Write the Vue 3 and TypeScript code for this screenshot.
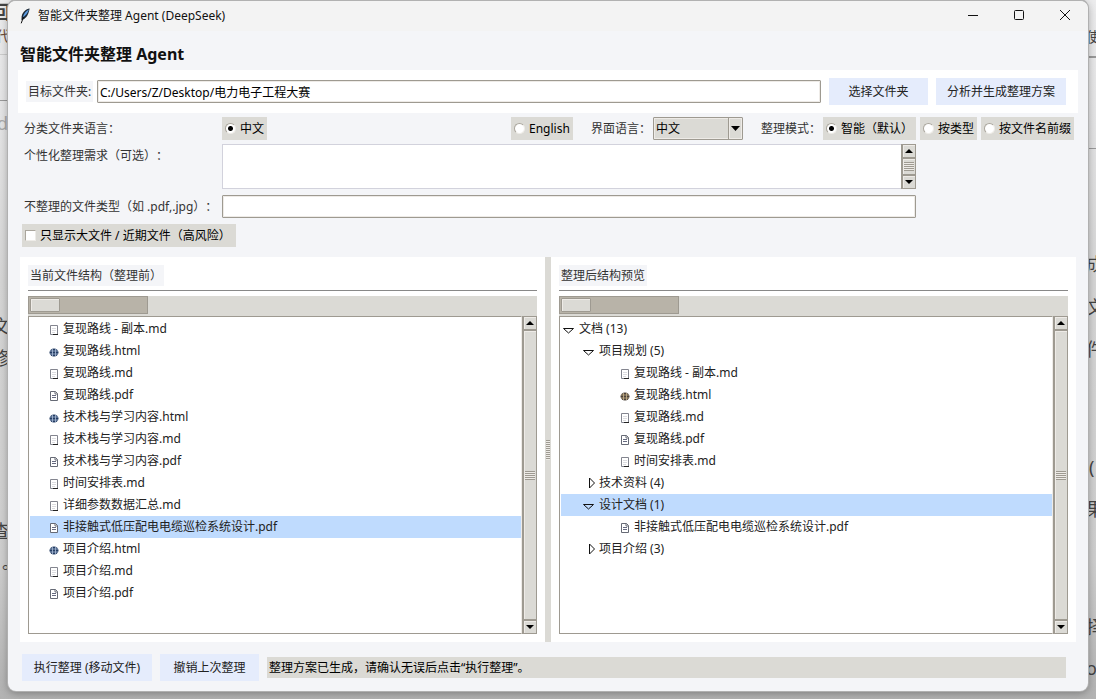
<script setup lang="ts">
import { ref } from 'vue'

type Kind = 'md' | 'html' | 'pdf' | 'open' | 'closed'
interface Row {
  kind: Kind
  text: string
  level: number
}
interface Pane {
  title: string
  rows: Row[]
}

const kindOf = (name: string): Kind => name.split('.').pop() as Kind
const file = (text: string, level: number): Row => ({ kind: kindOf(text), text, level })

const panes = ref<Pane[]>([
  {
    title: '当前文件结构（整理前）',
    rows: [
      '复现路线 - 副本.md',
      '复现路线.html',
      '复现路线.md',
      '复现路线.pdf',
      '技术栈与学习内容.html',
      '技术栈与学习内容.md',
      '技术栈与学习内容.pdf',
      '时间安排表.md',
      '详细参数数据汇总.md',
      '非接触式低压配电电缆巡检系统设计.pdf',
      '项目介绍.html',
      '项目介绍.md',
      '项目介绍.pdf',
    ].map((n) => file(n, 1)),
  },
  {
    title: '整理后结构预览',
    rows: [
      { kind: 'open', text: '文档 (13)', level: 0 },
      { kind: 'open', text: '项目规划 (5)', level: 2 },
      file('复现路线 - 副本.md', 3),
      file('复现路线.html', 3),
      file('复现路线.md', 3),
      file('复现路线.pdf', 3),
      file('时间安排表.md', 3),
      { kind: 'closed', text: '技术资料 (4)', level: 2 },
      { kind: 'open', text: '设计文档 (1)', level: 2 },
      file('非接触式低压配电电缆巡检系统设计.pdf', 3),
      { kind: 'closed', text: '项目介绍 (3)', level: 2 },
    ],
  },
])
const selected = ref<number[]>([9, 8])

const path = ref('C:/Users/Z/Desktop/电力电子工程大赛')
const folderLang = ref('zh')
const uiLang = ref('zh')
const mode = ref('smart')
const needs = ref('')
const excluded = ref('')
const onlyRisky = ref(false)
</script>

<template>
  <div class="desktop">
    <div class="behind" aria-hidden="true">
      <span class="frag l l1">回</span>
      <span class="frag l l2">代</span>
      <span class="frag l l3">d</span>
      <span class="frag l l4">文</span>
      <span class="frag l l5">修</span>
      <span class="frag l l6">查</span>
      <span class="frag l l7">。</span>
      <span class="frag r r1">使</span>
      <span class="frag r r2">成</span>
      <span class="frag r r3">文</span>
      <span class="frag r r4">件</span>
      <span class="frag r r5">(</span>
      <span class="frag r r6">果</span>
      <span class="frag r r7">择</span>
      <span class="frag r r8">oc</span>
      <i class="rule rule-a"></i>
      <i class="rule rule-b"></i>
      <i class="rule rule-c"></i>
      <i class="rule rule-d"></i>
    </div>

    <main class="window">
      <header class="titlebar">
        <svg class="feather" width="12" height="16" viewBox="0 0 12 16">
          <path d="M10.6 0.6C7 1 3.6 4 2.7 8.2L2.4 12l1.8-.4C7.600 10 9.700 6 10.6.6z" fill="#1b2733" />
          <path d="M10 1.400C7 2.600 4.600 5.300 3.800 9.300 6.500 8 8.800 5 10 1.400z" fill="#5b9be0" />
          <path d="M4.500 9 2.200 15.300" stroke="#111" stroke-width="1" fill="none" />
        </svg>
        <span class="caption">智能文件夹整理 Agent (DeepSeek)</span>
        <button class="sys" aria-label="最小化">
          <svg width="12" height="12" viewBox="0 0 12 12"><path d="M1 5.500h10" /></svg>
        </button>
        <button class="sys" aria-label="最大化">
          <svg width="12" height="12" viewBox="0 0 12 12"><rect x="1.500" y=".5" width="9" height="9" rx="1" /></svg>
        </button>
        <button class="sys" aria-label="关闭">
          <svg width="12" height="12" viewBox="0 0 12 12"><path d="M1 0l10 10M11 0L1 10" /></svg>
        </button>
      </header>

      <h1>智能文件夹整理 Agent</h1>

      <section class="target">
        <label class="tag" for="path">目标文件夹:</label>
        <input id="path" v-model="path" class="entry" type="text" />
        <button class="action pick">选择文件夹</button>
        <button class="action analyze">分析并生成整理方案</button>
      </section>

      <section class="options">
        <span class="lbl">分类文件夹语言：</span>
        <label class="choice first"><input v-model="folderLang" type="radio" name="fl" value="zh" />中文</label>
        <label class="choice"><input v-model="folderLang" type="radio" name="fl" value="en" />English</label>
        <label class="lbl mid" for="ui">界面语言：</label>
        <span class="combo">
          <select id="ui" v-model="uiLang">
            <option value="zh">中文</option>
            <option value="en">English</option>
          </select>
          <span class="drop"><svg width="9" height="5" viewBox="0 0 9 5"><path d="M0 0h9L4.500 5z" /></svg></span>
        </span>
        <span class="lbl mid">整理模式：</span>
        <label class="choice"><input v-model="mode" type="radio" name="mode" value="smart" />智能（默认）</label>
        <label class="choice gap"><input v-model="mode" type="radio" name="mode" value="type" />按类型</label>
        <label class="choice gap"><input v-model="mode" type="radio" name="mode" value="prefix" />按文件名前缀</label>

        <label class="lbl left" for="needs">个性化整理需求（可选）：</label>
        <div class="wide memo">
          <textarea id="needs" v-model="needs"></textarea>
          <div class="scroll">
            <button class="arrow" aria-label="向上"><svg width="8" height="4" viewBox="0 0 8 4"><path d="M0 4h8L4 0z" /></svg></button>
            <div class="thumb"><i class="grip"></i></div>
            <button class="arrow" aria-label="向下"><svg width="8" height="4" viewBox="0 0 8 4"><path d="M0 0h8L4 4z" /></svg></button>
          </div>
        </div>

        <label class="lbl left" for="excluded">不整理的文件类型（如 .pdf,.jpg）：</label>
        <input id="excluded" v-model="excluded" class="entry wide" type="text" />

        <label class="choice risky"><input v-model="onlyRisky" type="checkbox" />只显示大文件 / 近期文件（高风险）</label>
      </section>

      <section class="panes">
        <div v-for="(pane, p) in panes" :key="pane.title" class="pane">
          <h2 class="tag">{{ pane.title }}</h2>
          <hr />
          <div class="progress" role="progressbar" :aria-label="pane.title">
            <div class="trough"><div class="block"></div></div>
          </div>
          <div class="treebox">
            <ul class="tree">
              <li v-for="(row, i) in pane.rows" :key="row.text">
                <button
                  class="row"
                  :class="['lv' + row.level, { on: selected[p] === i }]"
                  @click="selected[p] = i"
                >
                  <svg v-if="row.kind === 'open'" class="tri" width="12" height="12" viewBox="0 0 12 12">
                    <path d="M.5 5.500h10L5.500 10z" />
                  </svg>
                  <svg v-else-if="row.kind === 'closed'" class="tri" width="12" height="12" viewBox="0 0 12 12">
                    <path d="M6.500 1v10L11.500 6z" />
                  </svg>
                  <svg v-else-if="row.kind === 'html'" class="ico" :class="{ warm: p === 1 }" width="10" height="10" viewBox="0 0 10 10">
                    <ellipse cx="5" cy="5.500" rx="4.500" ry="4" />
                    <path d="M1 4h8M1 7h8M3.500 2v7M6.500 2v7" stroke-width=".8" fill="none" />
                  </svg>
                  <svg v-else-if="row.kind === 'pdf'" class="ico" width="10" height="10" viewBox="0 0 10 10">
                    <path d="M1.500.5h5l2 2v7h-7z" fill="#fff" stroke="#666a75" />
                    <path d="M3 4.500h4M3 6.500h4" stroke="#666a80" fill="none" />
                    <path d="M6 .5v2.500h2.500" stroke="#666a75" fill="none" />
                  </svg>
                  <svg v-else class="ico" width="10" height="10" viewBox="0 0 10 10">
                    <path d="M1.500.5h7v9h-7z" fill="#fff" stroke="#83858f" />
                    <path d="M3 3.500h4M3 5.500h4M3 7.500h3" stroke="#dcdce0" fill="none" />
                    <path d="M4 9.500h5" stroke="#222" fill="none" />
                  </svg>
                  <span>{{ row.text }}</span>
                </button>
              </li>
            </ul>
            <div class="scroll">
              <button class="arrow" aria-label="向上"><svg width="8" height="4" viewBox="0 0 8 4"><path d="M0 4h8L4 0z" /></svg></button>
              <div class="thumb"><i class="grip"></i></div>
              <button class="arrow" aria-label="向下"><svg width="8" height="4" viewBox="0 0 8 4"><path d="M0 0h8L4 4z" /></svg></button>
            </div>
          </div>
        </div>
        <div class="sash"><i></i></div>
      </section>

      <footer>
        <button class="action run">执行整理 (移动文件)</button>
        <button class="action undo">撤销上次整理</button>
        <output>整理方案已生成，请确认无误后点击“执行整理”。</output>
      </footer>
    </main>
  </div>
</template>

<style>
body {
  margin: 0;
}
</style>

<style scoped>
* {
  box-sizing: border-box;
}
.desktop {
  position: relative;
  display: flex;
  min-height: 100vh;
  padding: 0 8px 8px;
  background: linear-gradient(#ececed 0, #e4e4e5 18%, #d6d6d6 40%, #cfcfcf 80%, #b2b2b2 100%);
  font-family: "Noto Sans", "Noto Sans CJK SC", sans-serif;
  font-size: 12px;
  line-height: 20px;
  text-spacing-trim: space-all;
  color: #222;
  overflow: hidden;
}
button,
input,
select,
textarea {
  font: inherit;
  color: inherit;
  margin: 0;
  padding: 0;
  border: 0;
  border-radius: 0;
  background: none;
}
.behind {
  position: absolute;
  inset: 0;
  overflow: hidden;
}
.frag {
  position: absolute;
  font-size: 18px;
  line-height: 24px;
  color: #444;
}
.l { right: calc(100% - 10px); }
.r { left: calc(100% - 10px); }
.l1 { top: 0; font-weight: bold; }
.l2 { top: 24px; font-size: 14px; color: #6b4a38; }
.l3 { top: 111px; right: calc(100% - 8px); color: #aaa; }
.l4 { top: 314px; }
.l5 { top: 346px; }
.l6 { top: 519px; }
.l7 { top: 550px; right: calc(100% - 20px); }
.r1 { top: 25px; font-size: 14px; }
.r2 { top: 252px; }
.r3 { top: 295px; }
.r4 { top: 337px; }
.r5 { top: 455px; left: calc(100% - 7px); }
.r6 { top: 497px; }
.r7 { top: 615px; }
.r8 { top: 656px; }
.rule {
  position: absolute;
  height: 1px;
  width: 8px;
  background: #999;
}
.rule-a { left: 0; top: 54px; background: #ccc; }
.rule-b { left: 0; top: 100px; }
.rule-c { right: 0; top: 56px; height: 2px; }
.rule-d { right: 0; top: 148px; }

.window {
  position: relative;
  flex: 1;
  min-width: 0;
  display: flex;
  flex-direction: column;
  background: #f4f5f8;
  border-top: 1px solid #b1b1b1;
  border-radius: 8px;
  box-shadow: 0 0 0 1px #b0b0b0, 0 2px 8px #00000055;
  overflow: hidden;
}
.titlebar {
  display: flex;
  align-items: center;
  height: 30px;
  padding-left: 11px;
  background: #f3f3f3;
  color: #111;
}
.caption {
  flex: 1;
  margin-left: 7px;
}
.sys {
  display: flex;
  align-items: center;
  justify-content: center;
  width: 46px;
  height: 28px;
}
.sys svg {
  fill: none;
  stroke: #111;
}
h1 {
  margin: 0;
  padding: 11px 12px 4px;
  font-size: 16px;
  line-height: 24px;
  font-weight: bold;
  color: #111;
}
.target {
  display: flex;
  align-items: center;
  margin: 0 10px;
  height: 43px;
  padding: 0 12px 0 8px;
  background: #fff;
}
.tag {
  align-self: flex-start;
  margin: 0;
  padding: 0 2px;
  height: 21px;
  background: #f4f5f8;
  font-size: 12px;
  line-height: 22px;
  font-weight: normal;
  color: #333;
}
.target .tag {
  align-self: center;
  width: 67px;
  margin-right: 4px;
  white-space: nowrap;
}
.entry {
  height: 23px;
  padding: 0 2px;
  background: #fff;
  border: 1px solid #9e9a91;
  border-radius: 1px;
  box-shadow: inset 0 0 0 1px #eeebe7;
  color: #000;
}
.target .entry {
  flex: 1;
  min-width: 0;
  margin-right: 8px;
}
.action {
  height: 27px;
  background: #e5ecfc;
  color: #222;
  white-space: nowrap;
}
.pick,
.undo {
  width: 99px;
  margin-right: 8px;
}
.analyze,
.run {
  width: 130px;
}
.run {
  margin-right: 8px;
}
.options {
  display: grid;
  grid-template-columns: 200px minmax(60px, 1fr) 62px 80px 90px 80px 93px 61px 97px;
  grid-template-rows: 27px 51px 29px 23px;
  align-items: start;
  margin: 4px 14px 10px;
}
.lbl {
  padding-left: 2px;
  line-height: 24px;
  white-space: nowrap;
  color: #333;
}
.mid {
  padding-left: 18px;
}
.left {
  grid-column: 1;
}
.wide {
  grid-column: 2 / 8;
}
.choice {
  display: flex;
  align-items: center;
  height: 23px;
  background: #dbdad5;
  color: #000;
  white-space: nowrap;
}
.first {
  justify-self: start;
  width: 45px;
}
.gap {
  margin-left: 4px;
}
.risky {
  grid-column: 1 / 3;
  justify-self: start;
  width: 214px;
}
.choice input {
  appearance: none;
  flex: none;
  width: 11px;
  height: 11px;
  margin: 0 4px 0 3px;
  background: #fff;
  border: 1px solid #aaa69d;
  border-right-color: #eeece8;
  border-bottom-color: #eeece8;
}
.choice input[type='radio'] {
  border-radius: 50%;
}
.choice input[type='radio']:checked {
  background: radial-gradient(circle, #000 0 2px, #fff 3px);
}
.choice input[type='checkbox']:checked {
  background: #000;
}
.combo {
  position: relative;
  display: block;
  height: 23px;
}
.combo select {
  appearance: none;
  width: 100%;
  height: 23px;
  padding: 0 18px 0 2px;
  background: #dbdad5;
  border: 1px solid #9e9a91;
  border-radius: 1px;
  box-shadow: inset 0 0 0 1px #eeebe7;
  color: #000;
}
.drop {
  position: absolute;
  top: 1px;
  right: 1px;
  bottom: 1px;
  width: 14px;
  display: flex;
  align-items: center;
  justify-content: center;
  border-left: 1px solid #9e9a91;
  box-shadow: inset 0 0 0 1px #eeebe7;
  pointer-events: none;
}
.memo {
  display: flex;
  height: 45px;
}
textarea {
  flex: 1;
  min-width: 0;
  height: 100%;
  padding: 2px;
  background: #fff;
  border: 1px solid #d2d2dc;
  border-right: 0;
  resize: none;
}
.scroll {
  display: flex;
  flex-direction: column;
  gap: 2px;
  width: 15px;
  padding: 1px 1px 1px 2px;
  background: #9e9a91;
}
.arrow,
.thumb {
  display: flex;
  align-items: center;
  justify-content: center;
  background: #dbdad5;
  box-shadow: inset 1px 1px 0 #eeebe7;
}
.arrow {
  flex: none;
  height: 12px;
}
.thumb {
  flex: 1;
}
.grip {
  width: 10px;
  height: 9px;
  background: repeating-linear-gradient(#9e9a91 0 1px, #eeebe7 1px 2px);
}
.panes {
  position: relative;
  flex: 1;
  display: grid;
  grid-template-columns: minmax(0, 1fr) minmax(0, 1fr);
  column-gap: 6px;
  margin: 0 12px;
}
.pane {
  display: flex;
  flex-direction: column;
  padding: 8px;
  background: #fff;
}
hr {
  width: 100%;
  height: 1px;
  margin: 4px 0 5px;
  border: 0;
  background: #888;
}
.progress {
  height: 20px;
  background: #dbdad5;
}
.trough {
  width: 120px;
  height: 18px;
  padding: 1px;
  background: #b8b3a8;
  border: 1px solid #9e9a91;
}
.block {
  width: 30px;
  height: 14px;
  background: #dbdad5;
  border: 1px solid #9e9a91;
  border-radius: 1px;
  box-shadow: inset 1px 1px 0 #eeebe7;
}
.treebox {
  flex: 1;
  display: flex;
}
.tree {
  flex: 1;
  min-width: 0;
  margin: 0;
  padding: 1px 0 1px 1px;
  list-style: none;
  border: 1px solid #9e9a91;
  border-right-color: #eeebe7;
  color: #222;
}
.row {
  display: flex;
  align-items: center;
  width: 100%;
  height: 22px;
  white-space: nowrap;
  text-align: left;
}
.row.on {
  background: #bfdbfe;
}
.lv0 { padding-left: 2px; }
.lv1 { padding-left: 19px; }
.lv2 { padding-left: 22px; }
.lv3 { padding-left: 59px; }
.ico {
  flex: none;
  margin: 2px 4px 0 0;
}
.ico ellipse {
  fill: #243c63;
}
.ico ellipse + path {
  stroke: #a9bdd8;
}
.warm ellipse {
  fill: #4a4038;
}
.warm ellipse + path {
  stroke: #c9b48a;
}
.tri {
  flex: none;
  margin-right: 4px;
  fill: none;
  stroke: #111;
}
.sash {
  position: absolute;
  top: 0;
  bottom: 0;
  left: calc(50% - 3px);
  width: 6px;
  display: flex;
  align-items: center;
  justify-content: center;
  background: #dbdad5;
}
.sash i {
  width: 4px;
  height: 20px;
  background: repeating-linear-gradient(#9e9a91 0 1px, #eeebe7 1px 2px);
}
footer {
  display: flex;
  align-items: center;
  padding: 12px 22px 10px 14px;
}
output {
  flex: 1;
  height: 21px;
  padding: 0 2px;
  background: #dbdad5;
  line-height: 22px;
  color: #000;
}
</style>
